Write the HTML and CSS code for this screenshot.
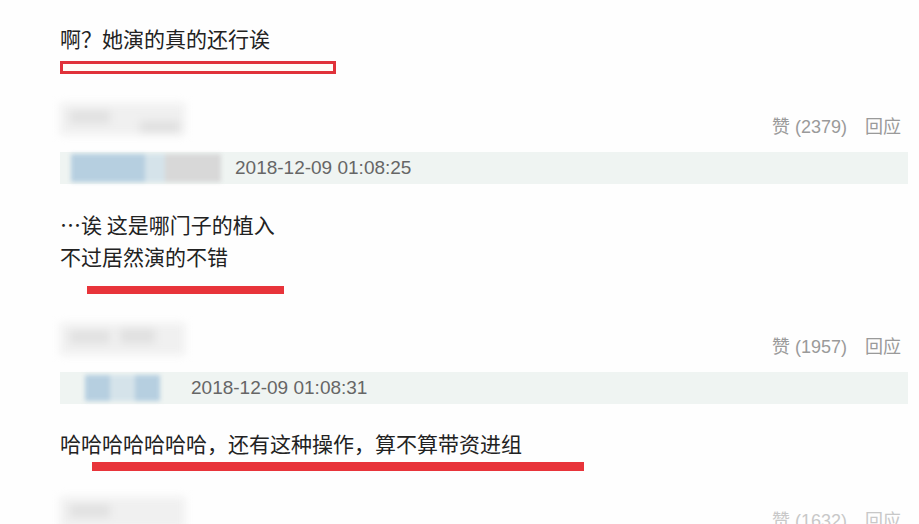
FILE: index.html
```html
<!DOCTYPE html>
<html lang="zh-CN">
<head>
    <meta charset="UTF-8">
    <meta name="viewport" content="width=device-width, initial-scale=1.0">
    <title>评论</title>
<link rel="stylesheet" href="styles.css">
</head>
<body>

<div class="comments">

  <p class="comment-text first-text">啊？她演的真的还行诶</p>
  <div class="mark-box"></div>

  <div class="comment">
    <div class="comment-head">
      <div class="name-blur">
        <span class="blot blot-a"></span>
        <span class="blot blot-b"></span>
      </div>
      <div class="actions">赞 (2379)<span class="reply">回应</span></div>
    </div>
    <div class="comment-meta">
      <div class="user-blur">
        <span class="tile tile-blue"></span>
        <span class="tile tile-light"></span>
        <span class="tile tile-gray"></span>
      </div>
      <span class="time">2018-12-09 01:08:25</span>
    </div>
    <p class="comment-text">…诶 这是哪门子的植入<br>不过居然演的不错</p>
    <div class="mark-bar mark-short"></div>
  </div>

  <div class="comment">
    <div class="comment-head">
      <div class="name-blur">
        <span class="blot blot-a"></span>
        <span class="blot blot-c"></span>
      </div>
      <div class="actions">赞 (1957)<span class="reply">回应</span></div>
    </div>
    <div class="comment-meta meta-narrow">
      <div class="user-blur">
        <span class="tile tile-blue small"></span>
        <span class="tile tile-light small"></span>
        <span class="tile tile-blue small"></span>
      </div>
      <span class="time">2018-12-09 01:08:31</span>
    </div>
    <p class="comment-text second-text">哈哈哈哈哈哈哈，还有这种操作，算不算带资进组</p>
    <div class="mark-bar mark-long"></div>
  </div>

  <div class="comment">
    <div class="comment-head last-head">
      <div class="name-blur">
        <span class="blot blot-a"></span>
      </div>
      <div class="actions faded">赞 (1632)<span class="reply">回应</span></div>
    </div>
  </div>

</div>

</body>
</html>
```

FILE: styles.css
```css
body {
  margin: 0;
  background-color: #fefefe;
  font-family: "Noto Sans CJK SC", "Liberation Sans", sans-serif;
  overflow: hidden;
}

.comments {
  width: 848px;
  padding: 22px 0 0 60px;
}

.comment-text {
  margin: 24px 0 0;
  font-size: 21px;
  line-height: 32px;
  color: #222;
}

.first-text {
  margin-top: 0;
}

.second-text {
  margin-top: 23px;
}

/* red highlight marks */
.mark-box {
  width: 270px;
  height: 7px;
  margin-top: 7px;
  border: 3px solid #e0323a;
  background-color: #fffdf8;
}

.mark-bar {
  height: 8px;
  background-color: #e8343a;
}

.mark-short {
  width: 197px;
  margin: 14px 0 0 27px;
}

.mark-long {
  width: 492px;
  height: 9px;
  margin: 3px 0 0 32px;
}

/* comment header */
.comment-head {
  display: flex;
  justify-content: space-between;
  align-items: center;
  height: 44px;
  margin-top: 29px;
}

.last-head {
  margin-top: 26px;
}

.name-blur {
  position: relative;
  align-self: flex-start;
  width: 125px;
  height: 32px;
  background-color: #f0f0f0;
  filter: blur(4px);
}

.blot {
  position: absolute;
  background-color: #e0e0e0;
}

.blot-a {
  left: 10px;
  top: 8px;
  width: 40px;
  height: 12px;
}

.blot-b {
  left: 80px;
  top: 18px;
  width: 40px;
  height: 12px;
}

.blot-c {
  left: 60px;
  top: 6px;
  width: 35px;
  height: 14px;
}

.actions {
  padding-right: 7px;
  font-family: "Liberation Sans", "Noto Sans CJK SC", sans-serif;
  font-size: 18px;
  color: #9a9a9a;
}

.actions.faded {
  color: #c8c8c8;
}

.reply {
  margin-left: 18px;
}

/* meta row with user + time */
.comment-meta {
  display: flex;
  align-items: center;
  height: 32px;
  margin-top: 5px;
  padding-left: 11px;
  background-color: #eff4f2;
}

.user-blur {
  display: flex;
  width: 150px;
  height: 28px;
  margin-right: 14px;
  filter: blur(2px);
}

.tile {
  height: 100%;
}

.tile-blue {
  width: 74px;
  background-color: #b6cfe0;
}

.tile-light {
  width: 20px;
  background-color: #d5e3ea;
}

.tile-gray {
  width: 56px;
  background-color: #d8d8d8;
}

.meta-narrow {
  padding-left: 25px;
}

.meta-narrow .user-blur {
  width: 75px;
  height: 26px;
  margin-right: 31px;
}

.tile.small {
  width: 25px;
}

.time {
  font-family: "Liberation Sans", sans-serif;
  font-size: 19px;
  color: #666;
}
```
